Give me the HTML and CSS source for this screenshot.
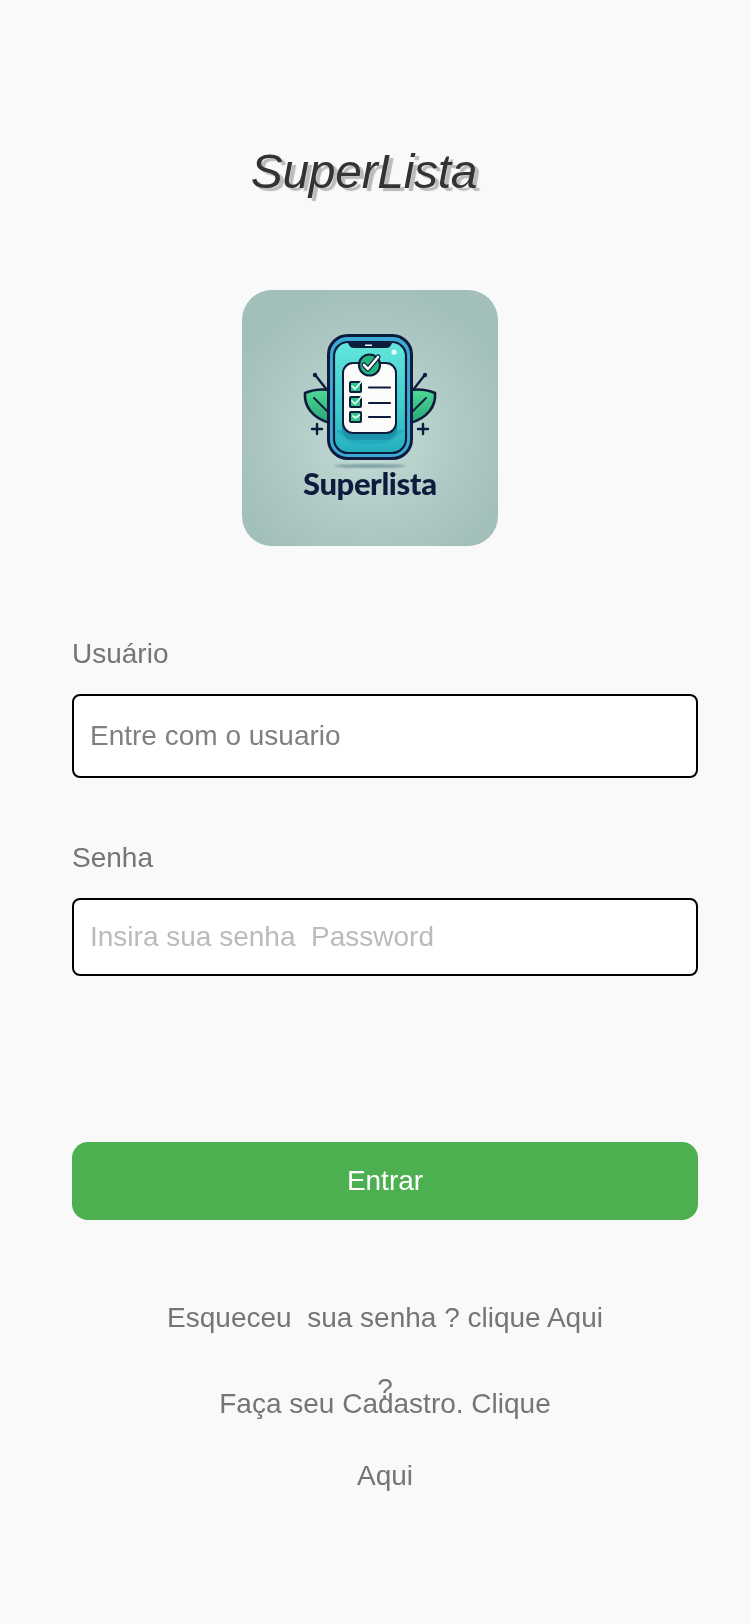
FILE: index.html
```html
<!DOCTYPE html>
<html lang="pt">
<head>
<meta charset="utf-8">
<title>SuperLista</title>
<link rel="stylesheet" href="styles.css">
</head>
<body>
<main class="screen">
  <h1 class="title">SuperLista</h1>
  <svg class="logo" viewBox="0 0 256 256" role="img" aria-label="Superlista">
    <defs>
      <radialGradient id="bg" cx="50%" cy="56%" r="58%">
        <stop offset="0" stop-color="#c9dfdb"/>
        <stop offset=".5" stop-color="#b2ccc8"/>
        <stop offset="1" stop-color="#a3bfba"/>
      </radialGradient>
      <linearGradient id="screen" x1="0" y1="0" x2="0" y2="1">
        <stop offset="0" stop-color="#62e6dc"/>
        <stop offset=".6" stop-color="#3fcbcb"/>
        <stop offset="1" stop-color="#25aebf"/>
      </linearGradient>
      <linearGradient id="leaf" x1="0" y1="0" x2="0" y2="1">
        <stop offset="0" stop-color="#4fd896"/>
        <stop offset="1" stop-color="#27a676"/>
      </linearGradient>
      <filter id="soft"><feGaussianBlur stdDeviation=".55"/></filter>
      <filter id="shadow"><feGaussianBlur stdDeviation="1.2"/></filter>
    </defs>
    <rect width="256" height="256" rx="30" fill="url(#bg)"/>
    <ellipse cx="128" cy="176" rx="36" ry="2" fill="#7d9fa0" filter="url(#shadow)"/>
    <g filter="url(#soft)" stroke-linecap="round" stroke-linejoin="round">
      <g fill="none" stroke="#0f1d3c" stroke-width="2.400">
        <path d="M85 100 74 86M171 100 182 86"/>
        <path d="M70 139h10M75 134v10M176 139h10M181 134v10"/>
      </g>
      <circle cx="73" cy="85" r="2.200" fill="#0f1d3c"/>
      <circle cx="183" cy="85" r="2.200" fill="#0f1d3c"/>
      <path d="M88 100C80 99 70 100 63 103 62 116 70 128 88 133Z" fill="url(#leaf)" stroke="#0f1d3c" stroke-width="2.600"/>
      <path d="M168 100C176 99 186 100 193 103 194 116 186 128 168 133Z" fill="url(#leaf)" stroke="#0f1d3c" stroke-width="2.600"/>
      <path d="M72 108 88 124M184 108 168 124" fill="none" stroke="#0f1d3c" stroke-width="1.800"/>
      <rect x="86.500" y="45.500" width="83" height="123" rx="19" fill="#3ea9d6" stroke="#0f1d3c" stroke-width="3"/>
      <rect x="92" y="52" width="72" height="111" rx="14" fill="url(#screen)" stroke="#0f1d3c" stroke-width="2.200"/>
      <path d="M106 53h44c-1 3-3 5-6 5h-32c-3 0-5-2-6-5Z" fill="#0f1d3c"/>
      <rect x="123" y="54.500" width="7" height="1.500" fill="#dff"/>
      <circle cx="152" cy="62" r="2.600" fill="#e9fbff"/>
      <path d="M94 140c8 10 16 14 34 14s24-4 34-14Z" fill="#1f9fb6" opacity=".55"/>
      <rect x="100" y="76" width="55" height="74" rx="11" fill="#1f93ad"/>
      <rect x="101" y="73" width="53" height="70" rx="10" fill="#fbfcfa" stroke="#0f1d3c" stroke-width="2"/>
      <circle cx="127.500" cy="75" r="10.500" fill="#26b57f" stroke="#0f1d3c" stroke-width="2.200"/>
      <path d="M122 75l4 4 10-12" fill="none" stroke="#0f1d3c" stroke-width="5"/>
      <path d="M122 75l4 4 10-12" fill="none" stroke="#fff" stroke-width="2.600"/>
      <g fill="#2fc48a" stroke="#0f1d3c" stroke-width="2">
        <rect x="108" y="92" width="11" height="10" rx="1"/>
        <rect x="108" y="107" width="11" height="10" rx="1"/>
        <rect x="108" y="122" width="11" height="10" rx="1"/>
      </g>
      <path d="M110 96l3 3 7-8M110 111l3 3 7-8M111 126l2.500 2 4-3" fill="none" stroke="#e8fff5" stroke-width="1.700"/>
      <path d="M127 97.500h21M127 113h21M127 127h21" fill="none" stroke="#0f1d3c" stroke-width="2.200"/>
    </g>
    <text class="logo-word" x="128" y="205" text-anchor="middle" textLength="134" filter="url(#soft)">Superlista</text>
  </svg>
  <form class="form">
    <label class="label" for="user">Usuário</label>
    <input class="field field-user" id="user" type="text" placeholder="Entre com o usuario">
    <label class="label label-pass" for="pass">Senha</label>
    <input class="field field-pass" id="pass" type="text" placeholder="Insira sua senha  Password">
    <button class="submit" type="button">Entrar</button>
  </form>
  <nav class="links">
    <a class="link link-forgot">Esqueceu&nbsp; sua senha ? clique Aqui</a>
    <span class="qmark">?</span>
    <a class="link link-signup">Faça seu Cadastro. Clique Aqui</a>
  </nav>
</main>
</body>
</html>
```
FILE: styles.css
```css
* { box-sizing: border-box; }
html, body { margin: 0; height: 100%; }
body {
  background: #f9f9f9;
  font-family: "Liberation Sans", Arial, sans-serif;
  color: #757575;
}
.screen {
  display: flex;
  flex-direction: column;
  min-height: 1624px;
  padding: 144px 52px 0 72px;
  will-change: transform;
}
.title {
  margin: 0 42px 0 0;
  height: 55px;
  font-size: 48px;
  line-height: 55px;
  font-weight: 400;
  font-style: italic;
  letter-spacing: -0.3px;
  text-align: center;
  color: #333;
  text-shadow: 4px 3px 1px #bbb;
}
.logo {
  display: block;
  width: 256px;
  height: 256px;
  margin: 91px 0 0 170px;
}
.logo-word {
  font-family: Lato, "Liberation Sans", sans-serif;
  font-size: 31px;
  font-weight: 900;
  fill: #0f1d3c;
}
.form {
  display: flex;
  flex-direction: column;
  margin-top: 92px;
}
.label {
  height: 32px;
  font-size: 28px;
  line-height: 32px;
  color: #757575;
}
.field {
  width: 100%;
  margin-top: 24px;
  padding: 0 16px;
  border: 2px solid #000;
  border-radius: 8px;
  background: #fff;
  font-family: inherit;
  font-size: 28px;
  outline: none;
}
.field-user { height: 84px; }
.field-pass { height: 78px; }
.field-user::placeholder { color: #808080; opacity: 1; }
.field-pass::placeholder { color: #bbb; opacity: 1; }
.label-pass { margin-top: 64px; }
.submit {
  height: 78px;
  margin-top: 166px;
  border: 0;
  border-radius: 16px;
  background: #4caf50;
  color: #fff;
  font-family: inherit;
  font-size: 28px;
}
.links {
  display: flex;
  flex-direction: column;
  align-items: center;
  margin-top: 62px;
  text-align: center;
  font-size: 28px;
}
.link { display: block; line-height: 72px; }
.link-forgot { height: 72px; }
.qmark { height: 32px; line-height: 32px; margin-top: 19px; }
.link-signup { width: 340px; margin-top: -37px; }
```
